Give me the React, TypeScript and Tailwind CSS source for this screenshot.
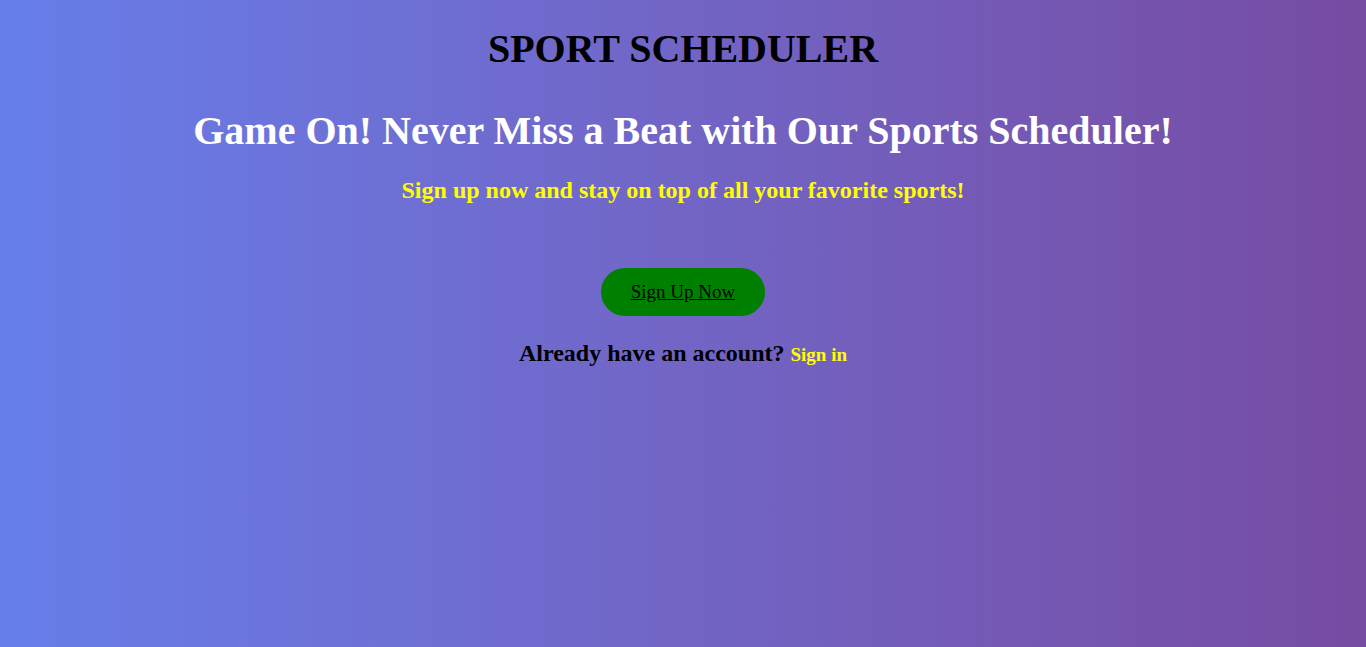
export default function App() {
    return (
        <div className="min-h-[647px] w-full bg-gradient-to-r from-[#667eea] to-[#764ba2] text-center font-['Liberation_Serif','Times_New_Roman',serif]">
            <h1 className="pt-[25px] text-[40px] font-bold leading-[48px] text-black">SPORT SCHEDULER</h1>
            <h2 className="mt-[33px] text-[40px] font-bold leading-[50px] text-white">
                Game On! Never Miss a Beat with Our Sports Scheduler!
            </h2>
            <p className="mt-[20px] text-[24px] font-bold leading-[28px] text-[#ffff00]">
                Sign up now and stay on top of all your favorite sports!
            </p>
            <div className="mt-[64px] flex justify-center">
                <a
                    href="#"
                    className="flex h-[48px] w-[164px] items-center justify-center rounded-full bg-[#008000] text-[19px] text-black underline"
                >
                    Sign Up Now
                </a>
            </div>
            <p className="mt-[23px] text-[24px] font-bold leading-[28px] text-black">
                Already have an account?{' '}
                <a href="#" className="text-[19px] text-[#ffff00]">Sign in</a>
            </p>
        </div>
    );
}
